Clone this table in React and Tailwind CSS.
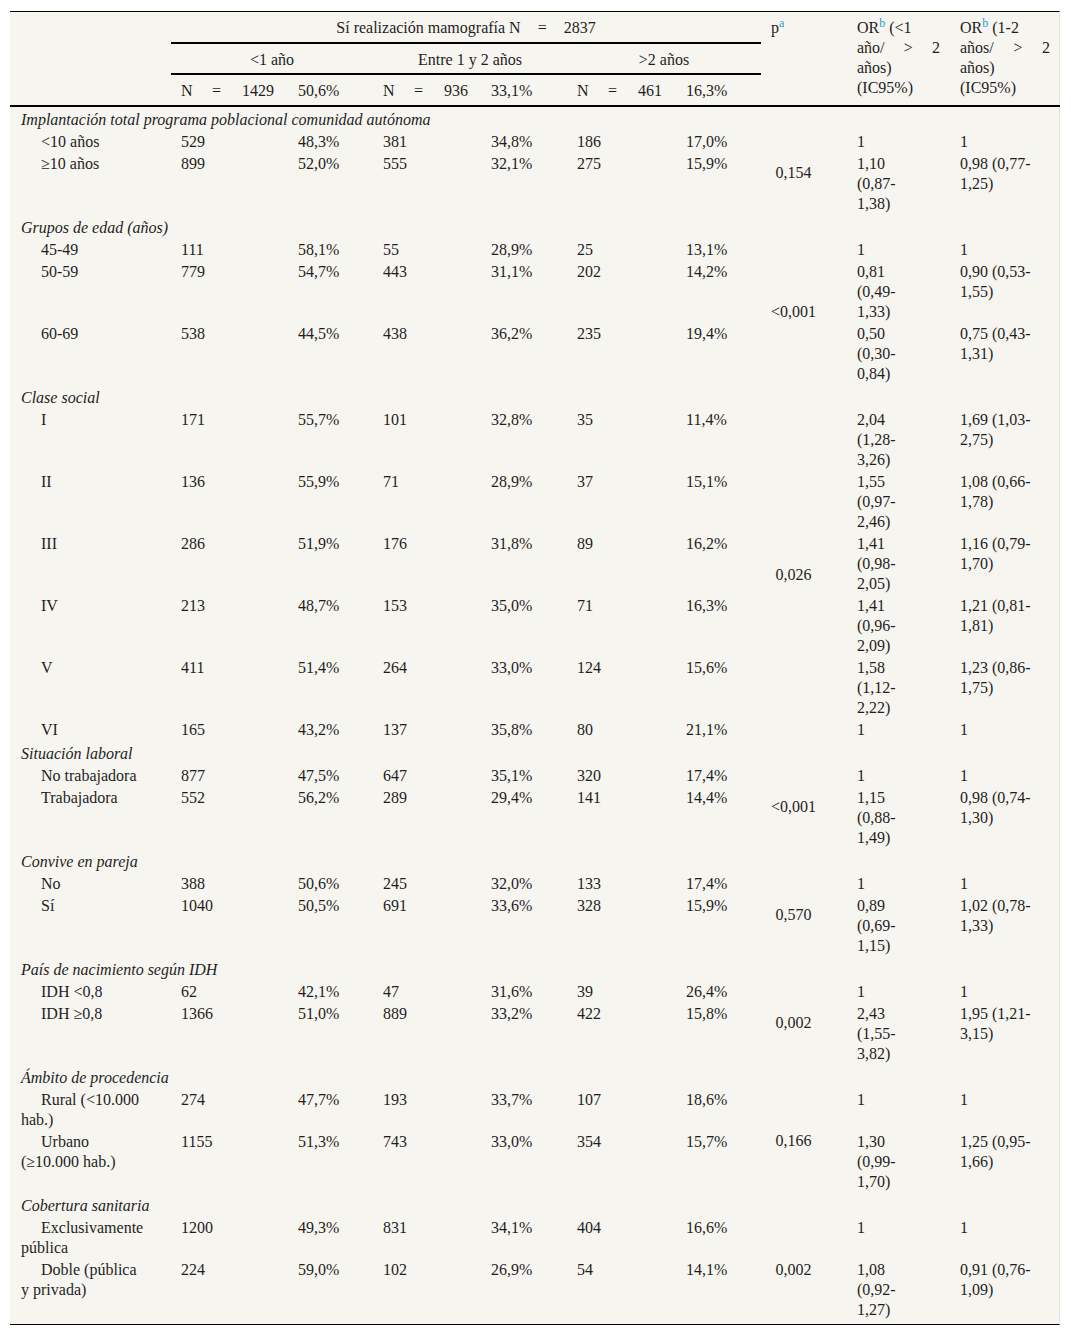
import React from "react";

const groups = [
  {
    title: "Implantación total programa poblacional comunidad autónoma",
    p: "0,154",
    rows: [
      [["<10 años"], "529", "48,3%", "381", "34,8%", "186", "17,0%", ["1"], ["1"]],
      [["≥10 años"], "899", "52,0%", "555", "32,1%", "275", "15,9%", ["1,10", "(0,87-", "1,38)"], ["0,98 (0,77-", "1,25)"]],
    ],
  },
  {
    title: "Grupos de edad (años)",
    p: "<0,001",
    rows: [
      [["45-49"], "111", "58,1%", "55", "28,9%", "25", "13,1%", ["1"], ["1"]],
      [["50-59"], "779", "54,7%", "443", "31,1%", "202", "14,2%", ["0,81", "(0,49-", "1,33)"], ["0,90 (0,53-", "1,55)"]],
      [["60-69"], "538", "44,5%", "438", "36,2%", "235", "19,4%", ["0,50", "(0,30-", "0,84)"], ["0,75 (0,43-", "1,31)"]],
    ],
  },
  {
    title: "Clase social",
    p: "0,026",
    rows: [
      [["I"], "171", "55,7%", "101", "32,8%", "35", "11,4%", ["2,04", "(1,28-", "3,26)"], ["1,69 (1,03-", "2,75)"]],
      [["II"], "136", "55,9%", "71", "28,9%", "37", "15,1%", ["1,55", "(0,97-", "2,46)"], ["1,08 (0,66-", "1,78)"]],
      [["III"], "286", "51,9%", "176", "31,8%", "89", "16,2%", ["1,41", "(0,98-", "2,05)"], ["1,16 (0,79-", "1,70)"]],
      [["IV"], "213", "48,7%", "153", "35,0%", "71", "16,3%", ["1,41", "(0,96-", "2,09)"], ["1,21 (0,81-", "1,81)"]],
      [["V"], "411", "51,4%", "264", "33,0%", "124", "15,6%", ["1,58", "(1,12-", "2,22)"], ["1,23 (0,86-", "1,75)"]],
      [["VI"], "165", "43,2%", "137", "35,8%", "80", "21,1%", ["1"], ["1"]],
    ],
  },
  {
    title: "Situación laboral",
    p: "<0,001",
    rows: [
      [["No trabajadora"], "877", "47,5%", "647", "35,1%", "320", "17,4%", ["1"], ["1"]],
      [["Trabajadora"], "552", "56,2%", "289", "29,4%", "141", "14,4%", ["1,15", "(0,88-", "1,49)"], ["0,98 (0,74-", "1,30)"]],
    ],
  },
  {
    title: "Convive en pareja",
    p: "0,570",
    rows: [
      [["No"], "388", "50,6%", "245", "32,0%", "133", "17,4%", ["1"], ["1"]],
      [["Sí"], "1040", "50,5%", "691", "33,6%", "328", "15,9%", ["0,89", "(0,69-", "1,15)"], ["1,02 (0,78-", "1,33)"]],
    ],
  },
  {
    title: "País de nacimiento según IDH",
    p: "0,002",
    rows: [
      [["IDH <0,8"], "62", "42,1%", "47", "31,6%", "39", "26,4%", ["1"], ["1"]],
      [["IDH ≥0,8"], "1366", "51,0%", "889", "33,2%", "422", "15,8%", ["2,43", "(1,55-", "3,82)"], ["1,95 (1,21-", "3,15)"]],
    ],
  },
  {
    title: "Ámbito de procedencia",
    p: "0,166",
    rows: [
      [["Rural (<10.000", "hab.)"], "274", "47,7%", "193", "33,7%", "107", "18,6%", ["1"], ["1"]],
      [["Urbano", "(≥10.000 hab.)"], "1155", "51,3%", "743", "33,0%", "354", "15,7%", ["1,30", "(0,99-", "1,70)"], ["1,25 (0,95-", "1,66)"]],
    ],
  },
  {
    title: "Cobertura sanitaria",
    p: "0,002",
    lastStyle: true,
    rows: [
      [["Exclusivamente", "pública"], "1200", "49,3%", "831", "34,1%", "404", "16,6%", ["1"], ["1"]],
      [["Doble (pública", "y privada)"], "224", "59,0%", "102", "26,9%", "54", "14,1%", ["1,08", "(0,92-", "1,27)"], ["0,91 (0,76-", "1,09)"]],
    ],
  },
];

function Lines({ lines }) {
  return lines.map((l, i) => (
    <React.Fragment key={i}>
      {i > 0 && <br />}
      {l}
    </React.Fragment>
  ));
}

const td = "align-top px-[10px] py-px text-left font-normal";

function Sup({ children }) {
  return <sup className="text-[12px] text-[#2a9ad6]">{children}</sup>;
}

function NCell({ n }) {
  return (
    <div className="flex">
      <span className="w-[31px]">N</span>
      <span className="w-[30px]">=</span>
      <span>{n}</span>
    </div>
  );
}

export default function App() {
  return (
    <div className="min-h-[1337px] bg-white pt-[11px] pl-[10px] font-['Liberation_Serif',serif] text-[16px] leading-[20px] text-[#1e1e1e]">
      <div className="w-[1050px] border-t border-b border-black bg-[#f7f5f0] pb-[3px] border-r border-r-[#e4e2dc]">
        <table className="table-fixed border-collapse w-[1050px]">
          <colgroup>
            <col className="w-[161px]" />
            <col className="w-[117px]" />
            <col className="w-[85px]" />
            <col className="w-[108px]" />
            <col className="w-[86px]" />
            <col className="w-[109px]" />
            <col className="w-[85px]" />
            <col className="w-[86px]" />
            <col className="w-[103px]" />
            <col className="w-[110px]" />
          </colgroup>
          <thead>
            <tr>
              <th rowSpan={3} className="border-b-2 border-black font-normal" />
              <th colSpan={6} className="border-b-2 border-black font-normal pt-[6px] pb-[4px]">
                <div className="flex justify-center gap-[17px]">
                  <span>Sí realización mamografía N</span>
                  <span>=</span>
                  <span>2837</span>
                </div>
              </th>
              <th rowSpan={3} className="align-top border-b-2 border-black font-normal text-left pt-[6px] px-[10px]">
                p<Sup>a</Sup>
              </th>
              <th rowSpan={3} className="align-top border-b-2 border-black font-normal text-left pt-[6px] px-[10px] pb-[3px]">
                <div>
                  OR<Sup>b</Sup> (&lt;1
                </div>
                <div className="flex justify-between">
                  <span>año/</span>
                  <span>&gt;</span>
                  <span>2</span>
                </div>
                <div>años)</div>
                <div>(IC95%)</div>
              </th>
              <th rowSpan={3} className="align-top border-b-2 border-black font-normal text-left pt-[6px] px-[10px] pb-[3px]">
                <div>
                  OR<Sup>b</Sup> (1-2
                </div>
                <div className="flex justify-between">
                  <span>años/</span>
                  <span>&gt;</span>
                  <span>2</span>
                </div>
                <div>años)</div>
                <div>(IC95%)</div>
              </th>
            </tr>
            <tr>
              <th colSpan={2} className="border-b-2 border-black font-normal text-center pt-[6px] pb-[3px]">
                &lt;1 año
              </th>
              <th colSpan={2} className="border-b-2 border-black font-normal text-center pt-[6px] pb-[3px]">
                Entre 1 y 2 años
              </th>
              <th colSpan={2} className="border-b-2 border-black font-normal text-center pt-[6px] pb-[3px]">
                &gt;2 años
              </th>
            </tr>
            <tr>
              <th className="border-b-2 border-black font-normal text-left px-[10px] pt-[6px] pb-[4px]">
                <NCell n="1429" />
              </th>
              <th className="border-b-2 border-black font-normal text-left px-[10px] pt-[6px] pb-[4px]">50,6%</th>
              <th className="border-b-2 border-black font-normal text-left px-[10px] pt-[6px] pb-[4px]">
                <NCell n="936" />
              </th>
              <th className="border-b-2 border-black font-normal text-left px-[10px] pt-[6px] pb-[4px]">33,1%</th>
              <th className="border-b-2 border-black font-normal text-left px-[10px] pt-[6px] pb-[4px]">
                <NCell n="461" />
              </th>
              <th className="border-b-2 border-black font-normal text-left px-[10px] pt-[6px] pb-[4px]">16,3%</th>
            </tr>
          </thead>
          <tbody>
            {groups.map((g, gi) => (
              <React.Fragment key={gi}>
                <tr>
                  <td colSpan={10} className="pl-[11px] pb-px pt-[3px] italic">
                    {g.title}
                  </td>
                </tr>
                {g.rows.map((r, ri) => (
                  <tr key={ri}>
                    <td className="align-top pl-[11px] pr-[10px] py-px indent-[20px]">
                      <Lines lines={r[0]} />
                    </td>
                    {r.slice(1, 7).map((c, ci) => (
                      <td key={ci} className={td}>
                        {c}
                      </td>
                    ))}
                    {g.lastStyle ? (
                      <td className={td}>
                        {ri === g.rows.length - 1 && (
                          <div className="w-[45px] text-center">{g.p}</div>
                        )}
                      </td>
                    ) : (
                      ri === 0 && (
                        <td rowSpan={g.rows.length} className="align-middle px-[10px] py-px">
                          <div className="w-[45px] text-center">{g.p}</div>
                        </td>
                      )
                    )}
                    <td className={td}>
                      <Lines lines={r[7]} />
                    </td>
                    <td className={td}>
                      <Lines lines={r[8]} />
                    </td>
                  </tr>
                ))}
              </React.Fragment>
            ))}
          </tbody>
        </table>
      </div>
    </div>
  );
}
